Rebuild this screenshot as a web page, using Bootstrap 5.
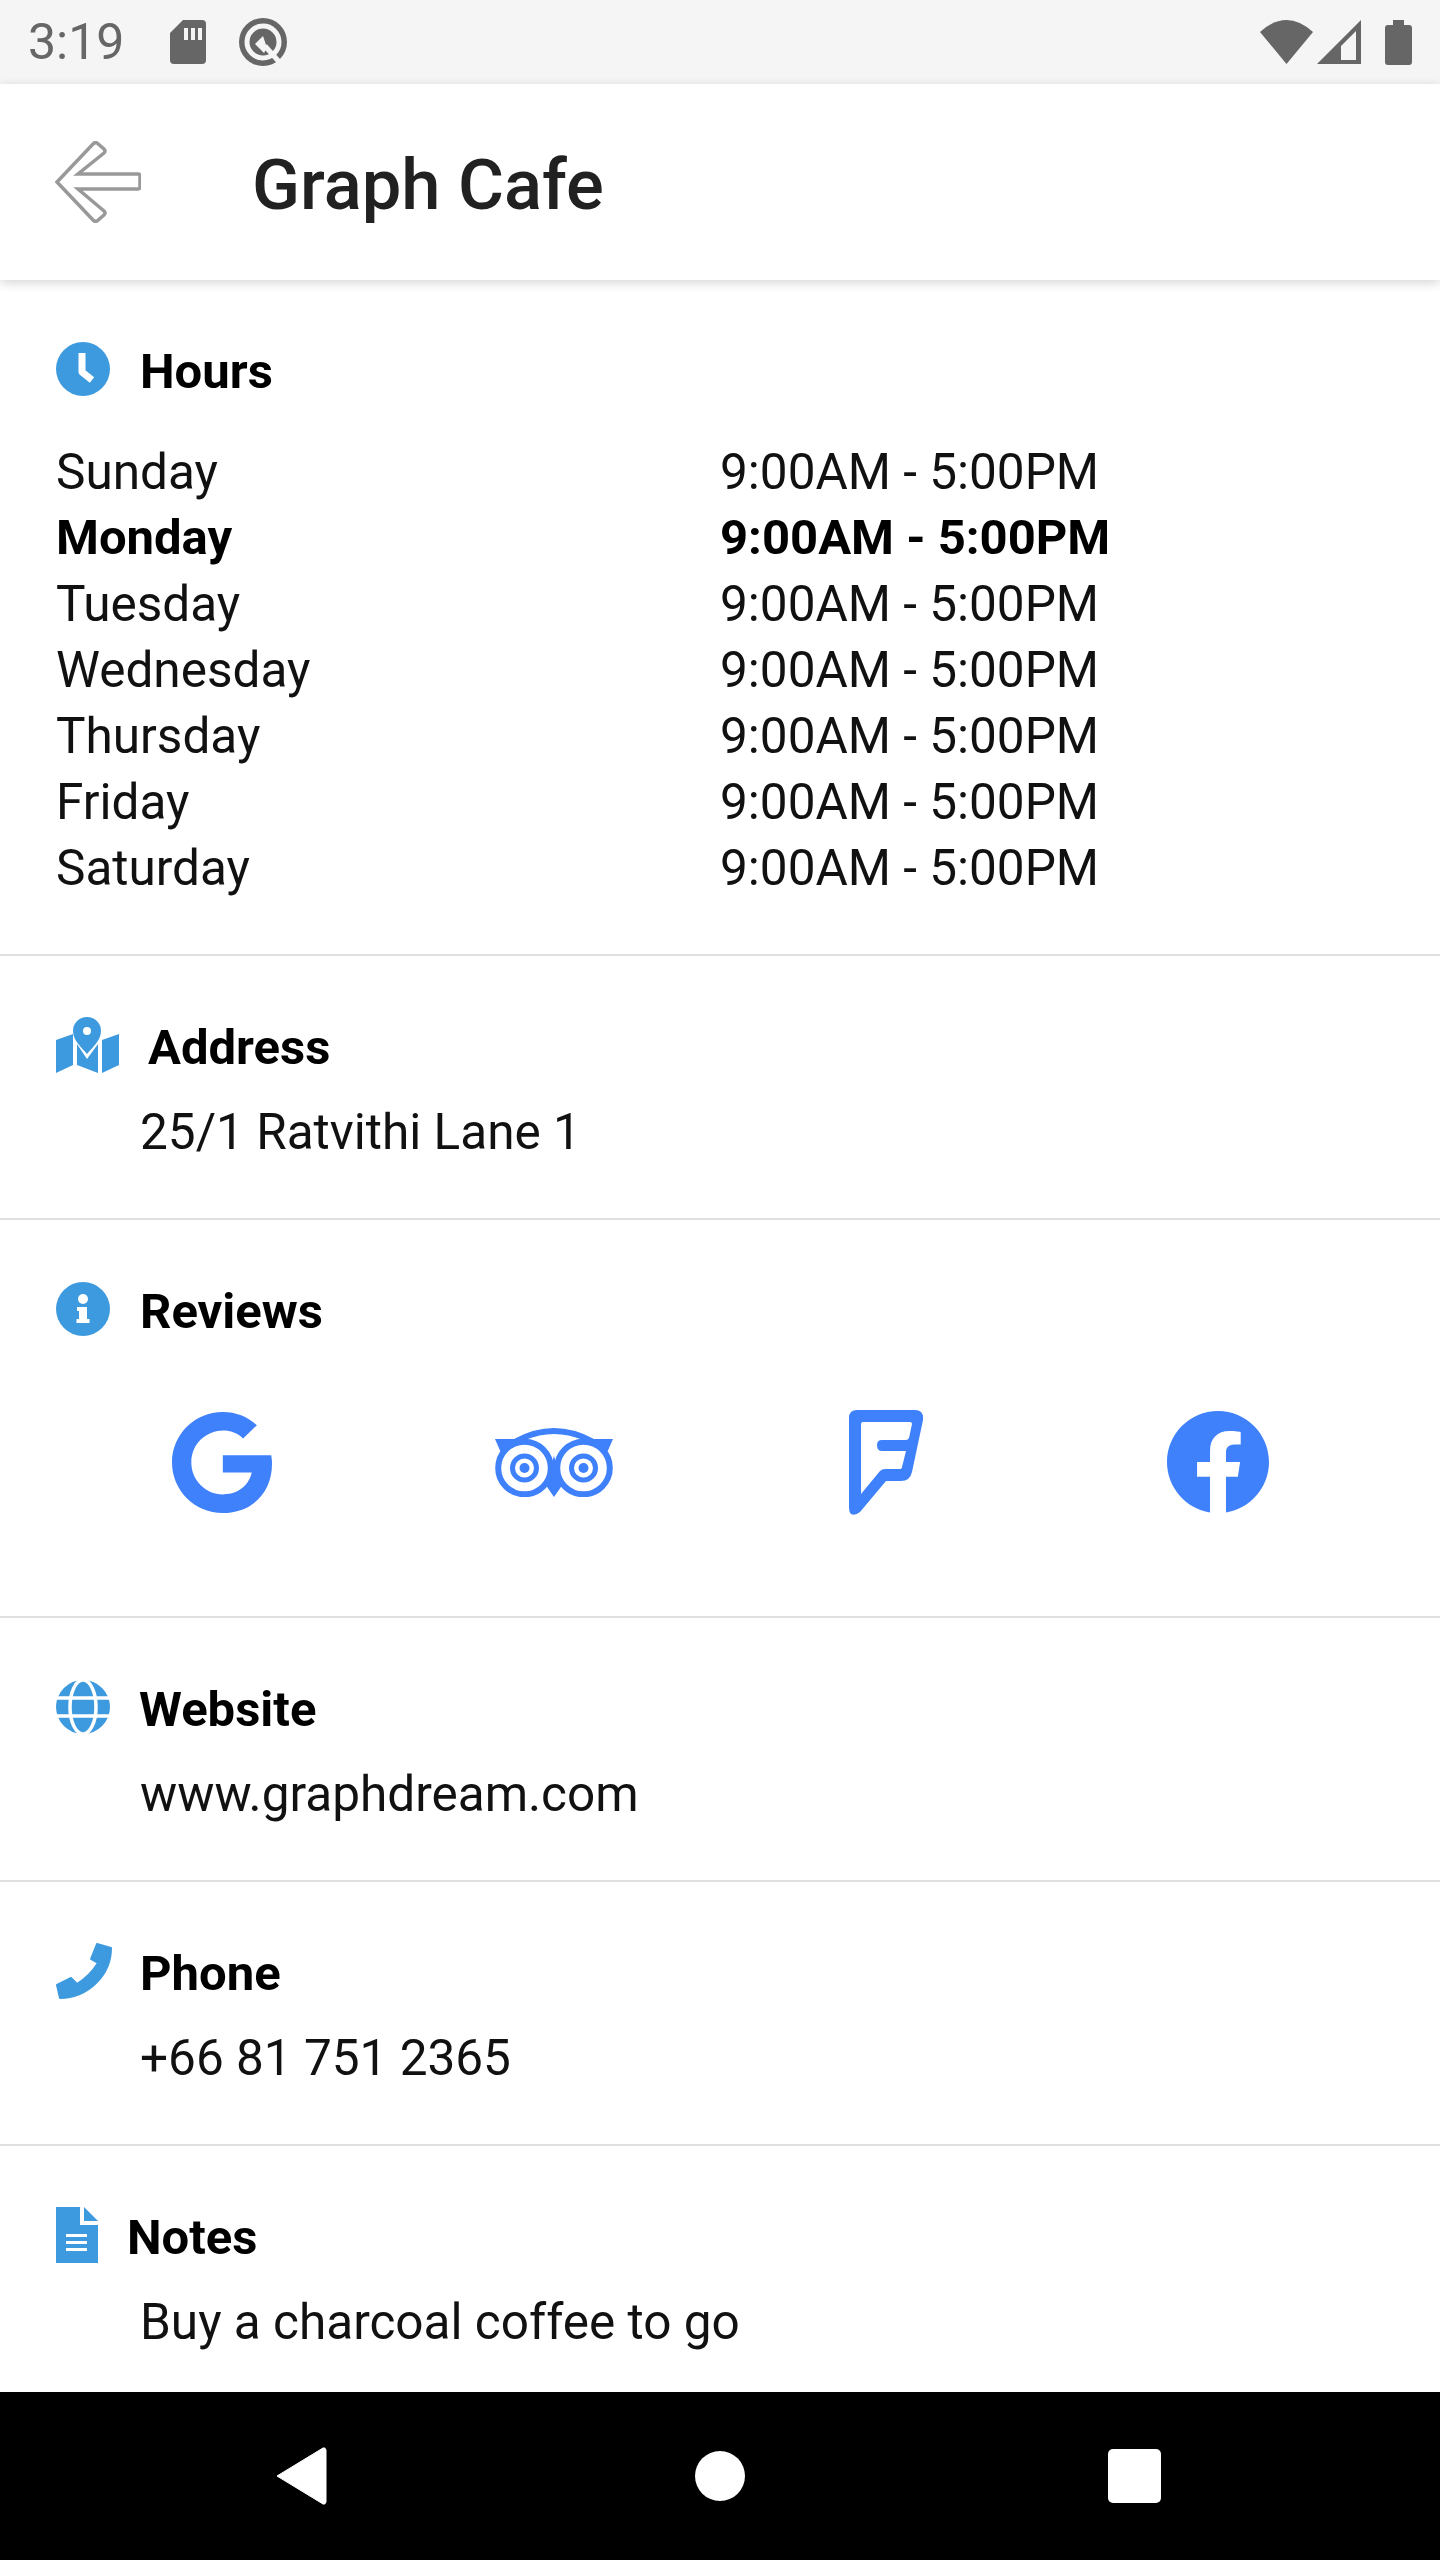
<!DOCTYPE html>
<html lang="en">
<head>
    <meta charset="UTF-8">
    <meta name="viewport" content="width=device-width, initial-scale=1.0">
    <title>Graph Cafe</title>
    <link href="https://cdn.jsdelivr.net/npm/bootstrap@5.3.0/dist/css/bootstrap.min.css" rel="stylesheet">
    <style>
        body {
            font-family: Roboto, "Liberation Sans", sans-serif;
            background: #fff;
            color: #111;
        }
        .phone-screen {
            width: 1440px;
            height: 2560px;
            overflow: hidden;
        }
        .status-strip {
            height: 84px;
            background: #f5f5f5;
            color: #666;
            padding: 0 28px;
            flex: none;
        }
        .status-time {
            font-size: 50px;
            font-weight: 400;
            line-height: 1;
            width: 142px;
        }
        .app-head {
            height: 196px;
            padding: 0 55px;
            background: #fff;
            box-shadow: 0 3px 10px rgba(0, 0, 0, .16);
            flex: none;
            flex-wrap: nowrap;
            justify-content: flex-start;
            position: relative;
        }
        .app-title {
            font-size: 70.5px;
            font-weight: 500;
            color: #212121;
            margin: 6px 0 0 111px;
            line-height: 1;
        }
        .info-sec {
            padding: 59px 56px 53px;
            border-bottom: 2px solid #e0e0e0;
        }
        .info-sec:last-child {
            border-bottom: 0;
            padding-bottom: 37px;
        }
        .sec-head {
            height: 66px;
            font-size: 49px;
            font-weight: 700;
            color: #000;
            gap: 29px;
        }
        .sec-head svg {
            margin-top: -6px;
        }
        .wide-gap {
            margin-right: 1px;
        }
        .tight-gap {
            margin-right: -1px;
        }
        .sec-value {
            font-size: 49.5px;
            line-height: 66px;
            margin: 18px 0 0 84px;
        }
        .hours-list {
            font-size: 49.5px;
            line-height: 66px;
            margin-top: 34px;
        }
        .today-row {
            font-size: 49px;
            font-weight: 700;
            color: #000;
        }
        .review-row {
            margin-top: 42px;
            margin-bottom: 26px;
            height: 150px;
        }
        .bottom-bar {
            height: 168px;
            background: #000;
            flex: none;
            margin-top: auto;
        }
        .nav-back { margin-left: 275px; }
        .nav-home { margin-left: 368px; }
        .nav-recent { margin-left: 363px; }
    </style>
</head>
<body>
    <div class="phone-screen d-flex flex-column">
        <!-- android status bar -->
        <div class="status-strip d-flex align-items-center">
            <span class="status-time">3:19</span>
            <svg width="36" height="44" viewBox="0 0 36 44" class="me-4"><path d="M13 0H32Q36 0 36 4V40Q36 44 32 44H4Q0 44 0 40V13Z" fill="#666"/><path d="M14 8h4v12h-4zM21 8h4v12h-4zM28 8h4v12h-4z" fill="#f5f5f5"/></svg>
            <svg width="50" height="50" viewBox="0 0 50 50" class="ms-2"><circle cx="25" cy="25" r="24" fill="#666"/><circle cx="25" cy="25" r="16" fill="#666" stroke="#f5f5f5" stroke-width="5"/><path d="M27 29L43 47" stroke="#f5f5f5" stroke-width="5"/><path d="M25 19L17 27l9 9 3-5z" fill="#f5f5f5"/></svg>
            <div class="ms-auto d-flex align-items-center">
                <svg width="53" height="44" viewBox="0 0 53 44"><path d="M0 12Q26.5-12 53 12L26.5 44Z" fill="#666"/></svg>
                <svg width="44" height="44" viewBox="0 0 44 44" class="ms-1"><path d="M0 44L44 0V44ZM24 40H39V11L24 26Z" fill="#666" fill-rule="evenodd"/></svg>
                <svg width="27" height="45" viewBox="0 0 27 45" class="ms-4"><path d="M8 0H19V5H24Q27 5 27 8V42Q27 45 24 45H3Q0 45 0 42V8Q0 5 3 5H8Z" fill="#666"/></svg>
            </div>
        </div>

        <nav class="navbar app-head">
            <svg width="86" height="82" viewBox="-1 -1 86 82"><path d="M1 40L37 2Q39 0 41 1L48 7Q50 9 48 11L22 32H82Q84 32 84 34V45Q84 47 82 47H22L48 69Q50 71 48 73L41 79Q39 80 37 78Z" fill="#fff" stroke="#999" stroke-width="3.5"/></svg>
            <span class="app-title">Graph Cafe</span>
        </nav>

        <main>
            <section class="info-sec">
                <div class="sec-head d-flex align-items-center">
                    <svg width="54" height="54" viewBox="0 0 54 54" class="wide-gap"><circle cx="27" cy="27" r="27" fill="#3e9ade"/><path d="M26 11V30L36 38" fill="none" stroke="#fff" stroke-width="7" stroke-linejoin="round"/></svg>
                    <span>Hours</span>
                </div>
                <div class="hours-list">
                    <div class="row g-0"><div class="col-6">Sunday</div><div class="col-6">9:00AM - 5:00PM</div></div>
                    <div class="row g-0 today-row"><div class="col-6">Monday</div><div class="col-6">9:00AM - 5:00PM</div></div>
                    <div class="row g-0"><div class="col-6">Tuesday</div><div class="col-6">9:00AM - 5:00PM</div></div>
                    <div class="row g-0"><div class="col-6">Wednesday</div><div class="col-6">9:00AM - 5:00PM</div></div>
                    <div class="row g-0"><div class="col-6">Thursday</div><div class="col-6">9:00AM - 5:00PM</div></div>
                    <div class="row g-0"><div class="col-6">Friday</div><div class="col-6">9:00AM - 5:00PM</div></div>
                    <div class="row g-0"><div class="col-6">Saturday</div><div class="col-6">9:00AM - 5:00PM</div></div>
                </div>
            </section>

            <section class="info-sec">
                <div class="sec-head d-flex align-items-center">
                    <svg width="63" height="56" viewBox="0 0 63 56" fill="#3e9ade"><path d="M31 0A14 14 0 0 1 45 14C45 23 37 30 31 37C25 30 17 23 17 14A14 14 0 0 1 31 0ZM31 10A4 4 0 1 0 31 18A4 4 0 0 0 31 10Z" fill-rule="evenodd"/><path d="M0 23L17 17V48L0 56ZM46 23L63 17V48L46 56ZM21 27L31 42L42 27V56L21 48Z"/></svg>
                    <span>Address</span>
                </div>
                <div class="sec-value">25/1 Ratvithi Lane 1</div>
            </section>

            <section class="info-sec">
                <div class="sec-head d-flex align-items-center">
                    <svg width="54" height="54" viewBox="0 0 54 54" class="wide-gap"><circle cx="27" cy="27" r="27" fill="#3e9ade"/><circle cx="27" cy="17" r="5" fill="#fff"/><path d="M21 25H31V37H33.500V41H20.500V37H23V29H21Z" fill="#fff"/></svg>
                    <span>Reviews</span>
                </div>
                <div class="review-row row g-0 align-items-center text-center">
                    <div class="col-3">
                        <svg width="100" height="101" viewBox="0 8 488 496" preserveAspectRatio="none"><path fill="#3f80fb" d="M488 261.8C488 403.3 391.1 504 248 504 110.8 504 0 393.2 0 256S110.8 8 248 8c66.8 0 123 24.5 166.3 64.9l-67.5 64.9C258.5 52.6 94.3 116.6 94.3 256c0 86.5 69.1 156.6 153.7 156.6 98.2 0 135-70.4 140.8-106.9H248v-85.3h236.1c2.3 12.7 3.9 24.9 3.9 41.4z"/></svg>
                    </div>
                    <div class="col-3">
                        <svg width="118" height="69" viewBox="0 0 118 69" fill="#3f80fb"><path d="M19 11Q59-11 99 11L88 12Q59 0 30 12Z"/><path d="M0 11H25L7 27ZM118 11H93L111 27ZM59 69L50 56L59 28L68 56Z"/><g fill="#fff" stroke="#3f80fb"><circle cx="29.5" cy="40" r="26.3" stroke-width="6"/><circle cx="88.5" cy="40" r="26.3" stroke-width="6"/><circle cx="29.5" cy="40" r="12" stroke-width="5"/><circle cx="88.5" cy="40" r="12" stroke-width="5"/></g><circle cx="29.5" cy="40" r="5"/><circle cx="88.5" cy="40" r="5"/></svg>
                    </div>
                    <div class="col-3">
                        <svg width="75" height="105" viewBox="0 0 75 105"><path fill="#3f80fb" fill-rule="evenodd" d="M0 8Q0 0 8 0H66Q75 0 74 10L63 62Q61 71 52 71H37L11 102Q6 106 2 104Q0 102 0 98ZM12 14V84L31 61Q33 59 36 59H50Q53 59 53 57L57 41H33Q28 41 28 35Q28 30 33 30H57Q59 30 60 28L63 14Q63 12 61 12H14Q12 12 12 14Z"/></svg>
                    </div>
                    <div class="col-3">
                        <svg width="102" height="102" viewBox="8 8 496 496"><path fill="#3f80fb" d="M504 256C504 119 393 8 256 8S8 119 8 256c0 123.78 90.69 226.38 209.25 245V327.69h-63V256h63v-54.64c0-62.15 37-96.48 93.67-96.48 27.14 0 55.52 4.84 55.52 4.84v61h-31.28c-30.8 0-40.41 19.12-40.41 38.73V256h68.78l-11 71.69h-57.78V501C413.31 482.38 504 379.78 504 256z"/></svg>
                    </div>
                </div>
            </section>

            <section class="info-sec">
                <div class="sec-head d-flex align-items-center">
                    <svg width="54" height="54" viewBox="0 0 54 54"><circle cx="27" cy="27" r="27" fill="#3e9ade"/><g fill="none" stroke="#fff" stroke-width="3.5"><ellipse cx="27" cy="27" rx="13" ry="27"/><path d="M0 18H54M0 36H54"/></g></svg>
                    <span>Website</span>
                </div>
                <div class="sec-value">www.graphdream.com</div>
            </section>

            <section class="info-sec">
                <div class="sec-head d-flex align-items-center">
                    <svg width="56" height="56" viewBox="0 0 56 56" class="tight-gap"><path d="M41 1L55 5C55 32 32 55 4 55L1 42L15 35L21 41C29 36 37 28 42 20L35 16Z" fill="#3e9ade" stroke="#3e9ade" stroke-width="2" stroke-linejoin="round"/></svg>
                    <span>Phone</span>
                </div>
                <div class="sec-value">+66 81 751 2365</div>
            </section>

            <section class="info-sec">
                <div class="sec-head d-flex align-items-center">
                    <svg width="42" height="56" viewBox="0 0 42 56"><path d="M0 0H24V18H42V56H0Z" fill="#3e9ade"/><path d="M28 0L42 14H28Z" fill="#3e9ade"/><path d="M10 27h21v3H10zM10 34h21v3H10zM10 41h21v3H10z" fill="#fff"/></svg>
                    <span>Notes</span>
                </div>
                <div class="sec-value">Buy a charcoal coffee to go</div>
            </section>
        </main>

        <!-- android nav buttons -->
        <div class="bottom-bar d-flex align-items-center">
            <div class="d-flex w-100 align-items-center">
                <svg width="52" height="58" viewBox="0 0 52 58" class="nav-back"><path d="M2 29L48 1Q50 0 51 3V55Q50 58 48 57Z" fill="#fff" stroke="#fff" stroke-linejoin="round"/></svg>
                <svg width="50" height="50" viewBox="0 0 50 50" class="nav-home"><circle cx="25" cy="25" r="25" fill="#fff"/></svg>
                <svg width="53" height="54" viewBox="0 0 53 54" class="nav-recent"><rect width="53" height="54" rx="5" fill="#fff"/></svg>
            </div>
        </div>
    </div>

    <script src="https://cdn.jsdelivr.net/npm/bootstrap@5.3.0/dist/js/bootstrap.bundle.min.js"></script>
</body>
</html>
